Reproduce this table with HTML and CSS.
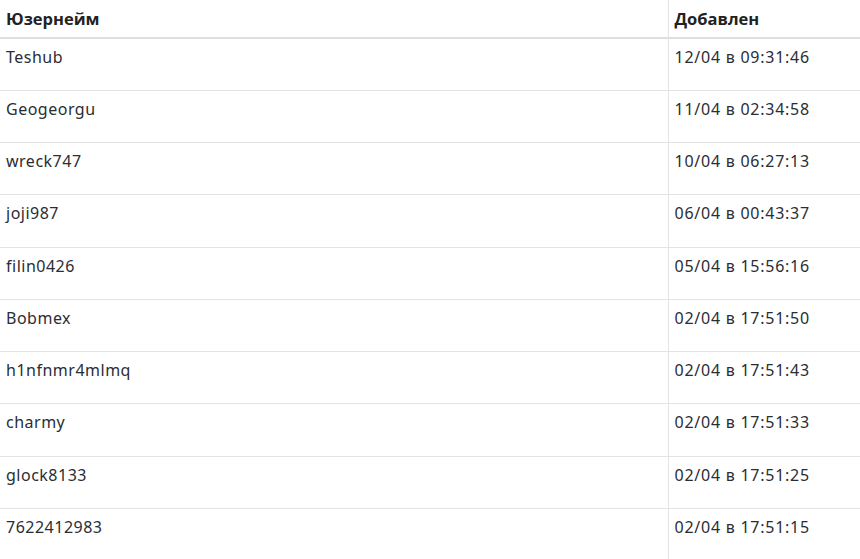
FILE: index.html
```html
<!DOCTYPE html>
<html lang="ru">
<head>
<meta charset="utf-8">
<link rel="stylesheet" href="styles.css">
</head>
<body>
<table class="users">
  <thead>
    <tr><th class="c-user">Юзернейм</th><th class="c-date">Добавлен</th></tr>
  </thead>
  <tbody>
    <tr><td>Teshub</td><td class="date">12/04 в 09:31:46</td></tr>
    <tr><td>Geogeorgu</td><td class="date">11/04 в 02:34:58</td></tr>
    <tr><td>wreck747</td><td class="date">10/04 в 06:27:13</td></tr>
    <tr><td>joji987</td><td class="date">06/04 в 00:43:37</td></tr>
    <tr><td>filin0426</td><td class="date">05/04 в 15:56:16</td></tr>
    <tr><td>Bobmex</td><td class="date">02/04 в 17:51:50</td></tr>
    <tr><td>h1nfnmr4mlmq</td><td class="date">02/04 в 17:51:43</td></tr>
    <tr><td>charmy</td><td class="date">02/04 в 17:51:33</td></tr>
    <tr><td>glock8133</td><td class="date">02/04 в 17:51:25</td></tr>
    <tr><td>7622412983</td><td class="date">02/04 в 17:51:15</td></tr>
  </tbody>
</table>
</body>
</html>
```
FILE: styles.css
```css
html, body { margin: 0; padding: 0; background: #fff; }
body { font-family: "Noto Sans", "Open Sans", sans-serif; color: #2a2d34; }
.users { border-collapse: collapse; width: 860px; table-layout: fixed; }
.c-user { width: 668px; }
.users th {
  font-family: "Open Sans", sans-serif;
  font-weight: 700;
  font-size: 16.5px;
  text-align: left;
  height: 38px;
  padding: 0 6px 1px;
  box-sizing: border-box;
  vertical-align: middle;
  border-bottom: 2px solid #dedede;
  color: #222;
}
.users th + th, .users td + td { border-left: 1px solid #e3e3e3; }
.users td {
  font-size: 16px;
  letter-spacing: 0.5px;
  height: 52.25px;
  box-sizing: border-box;
  padding: 7px 6px 0;
  vertical-align: top;
  border-bottom: 1px solid #e3e3e3;
  line-height: 22px;
}
.users td.date { letter-spacing: 0.75px; }
.users tbody tr:last-child td { border-bottom: none; }
```
